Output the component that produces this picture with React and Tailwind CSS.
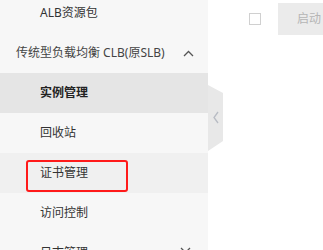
import React from "react";

function Row({ children, className = "", right = null, indent = true, extra = null }) {
  return (
    <div className={`relative flex h-10 shrink-0 items-center ${indent ? "pl-10" : "pl-4"} pr-4 ${className}`}>
      <span className="whitespace-nowrap">{children}</span>
      {right}
      {extra}
    </div>
  );
}

export default function App() {
  return (
    <div
      className="relative flex h-[250px] w-[323px] overflow-hidden bg-white text-[12px] text-[#333]"
      style={{ fontFamily: '"Noto Sans", "Noto Sans CJK SC", sans-serif' }}
    >
      <aside className="flex w-[208px] shrink-0 flex-col bg-[#f7f7f7]">
        <div className="mt-[-7px] shrink-0">
          <Row>ALB资源包</Row>
        </div>
        <Row
          indent={false}
          className="text-[#444]"
          right={
            <svg className="absolute left-[183px] top-[17px]" width="11" height="7" viewBox="0 0 11 7">
              <path d="M1 6 L5.5 1.5 L10 6" fill="none" stroke="#555" strokeWidth="1.3" />
            </svg>
          }
        >
          传统型负载均衡 CLB(原SLB)
        </Row>
        <Row className="bg-[#e5e5e5] font-bold text-[#222]">实例管理</Row>
        <Row>回收站</Row>
        <Row
          className="bg-[#f0f0f0]"
          extra={
            <div className="pointer-events-none absolute left-[26px] top-[7px] h-[32px] w-[102px] rounded-[3px] border-2 border-[#ff1a1a]" />
          }
        >
          证书管理
        </Row>
        <Row>访问控制</Row>
        <Row
          right={
            <svg className="absolute left-[180px] top-[14px]" width="11" height="7" viewBox="0 0 11 7">
              <path d="M1 1 L5.5 5.5 L10 1" fill="none" stroke="#555" strokeWidth="1.3" />
            </svg>
          }
        >
          日志管理
        </Row>
      </aside>

      <main className="flex-1">
        <div className="mt-[3px] flex items-center">
          <div className="ml-[41px] h-[12px] w-[12px] border border-[#d0d0d0] bg-white" />
          <div className="ml-[17px] flex h-[32px] w-[60px] shrink-0 items-center bg-[#ebebeb] pl-[19px] text-[#b5b5b5]">
            启动
          </div>
        </div>
      </main>

      <svg className="absolute left-[208px] top-[85px]" width="16" height="67" viewBox="0 0 16 67">
        <polygon points="0,0 15,8 15,56 0,66" fill="#e8e8e8" />
        <path d="M10 27 L6 32.5 L10 38" fill="none" stroke="#b8bcc4" strokeWidth="1.3" />
      </svg>
    </div>
  );
}
